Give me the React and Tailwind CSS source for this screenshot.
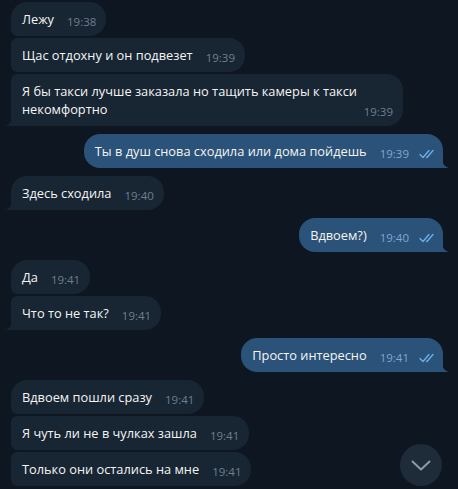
const messages = [
  { id: 1, out: false, text: 'Лежу', time: '19:38', first: true, last: false },
  { id: 2, out: false, text: 'Щас отдохну и он подвезет', time: '19:39', first: false, last: false },
  { id: 3, out: false, text: 'Я бы такси лучше заказала но тащить камеры к такси некомфортно', time: '19:39', first: false, last: true },
  { id: 4, out: true, text: 'Ты в душ снова сходила или дома пойдешь', time: '19:39', first: true, last: true },
  { id: 5, out: false, text: 'Здесь сходила', time: '19:40', first: true, last: true },
  { id: 6, out: true, text: 'Вдвоем?)', time: '19:40', first: true, last: true },
  { id: 7, out: false, text: 'Да', time: '19:41', first: true, last: false },
  { id: 8, out: false, text: 'Что то не так?', time: '19:41', first: false, last: true },
  { id: 9, out: true, text: 'Просто интересно', time: '19:41', first: true, last: true },
  { id: 10, out: false, text: 'Вдвоем пошли сразу', time: '19:41', first: true, last: false },
  { id: 11, out: false, text: 'Я чуть ли не в чулках зашла', time: '19:41', first: false, last: false },
  { id: 12, out: false, text: 'Только они остались на мне', time: '19:41', first: false, last: false },
];

function DoubleCheck() {
  return (
    <svg width="18" height="10" viewBox="0 0 18 10" fill="none" className="inline-block">
      <path d="M1 5.5 L4 8.5 L10 1.5" stroke="#6cb1ee" strokeWidth="1.3" strokeLinecap="round" strokeLinejoin="round" />
      <path d="M7.5 8.2 L8 8.5 L14 1.5" stroke="#6cb1ee" strokeWidth="1.3" strokeLinecap="round" strokeLinejoin="round" />
    </svg>
  );
}

function Tail({ out }) {
  if (out) {
    return (
      <svg width="7" height="10" viewBox="0 0 7 10" className="absolute bottom-0 -right-[6px]">
        <path d="M0 0 Q0 8 7 10 L0 10 Z" fill="#2b5278" />
      </svg>
    );
  }
  return (
    <svg width="7" height="10" viewBox="0 0 7 10" className="absolute bottom-0 -left-[6px]">
      <path d="M7 0 Q7 8 0 10 L7 10 Z" fill="#182533" />
    </svg>
  );
}

function Bubble({ msg, prevOut }) {
  const { out, text, time, first, last } = msg;
  let corners;
  if (out) {
    corners = `rounded-l-[16px] ${first ? 'rounded-tr-[16px]' : 'rounded-tr-[6px]'} ${last ? 'rounded-br-none' : 'rounded-br-[6px]'}`;
  } else {
    corners = `rounded-r-[16px] ${first ? 'rounded-tl-[16px]' : 'rounded-tl-[6px]'} ${last ? 'rounded-bl-none' : 'rounded-bl-[6px]'}`;
  }
  const gap = prevOut === undefined ? '' : prevOut === out ? 'mt-[2px]' : 'mt-[8px]';

  return (
    <div className={`flex ${out ? 'justify-end' : 'justify-start'} ${gap}`}>
      <div
        className={`relative max-w-[392px] pl-[11px] ${out ? 'pr-[6px] bg-[#2b5278]' : 'pr-[10px] bg-[#182533]'} py-[8px] text-[12.8px] leading-[18px] text-[#f5f5f5] ${corners}`}
      >
        {text}
        <span
          className={`float-right relative top-[3px] ml-[13px] flex items-center gap-[10px] text-[11.5px] leading-[18px] ${out ? 'text-[#7da8d3]' : 'text-[#6d7f8f]'}`}
        >
          {time}
          {out && <DoubleCheck />}
        </span>
        {last && <Tail out={out} />}
      </div>
    </div>
  );
}

export default function App() {
  return (
    <div
      className="relative h-[489px] w-[458px] overflow-hidden bg-[#0e1621]"
      style={{ fontFamily: '"Open Sans", "Noto Sans", sans-serif' }}
    >
      <div className="flex flex-col pt-[2px] pl-[11px] pr-[15px]">
        {messages.map((m, i) => (
          <Bubble key={m.id} msg={m} prevOut={i === 0 ? undefined : messages[i - 1].out} />
        ))}
      </div>

      <button className="absolute bottom-[3px] right-[16px] flex h-[42px] w-[42px] items-center justify-center rounded-full bg-[#1e2c3a]">
        <svg width="20" height="11" viewBox="0 0 20 11" fill="none">
          <path d="M1.5 1.5 L10 9.5 L18.5 1.5" stroke="#8d99a5" strokeWidth="2" strokeLinecap="round" strokeLinejoin="round" />
        </svg>
      </button>
    </div>
  );
}
